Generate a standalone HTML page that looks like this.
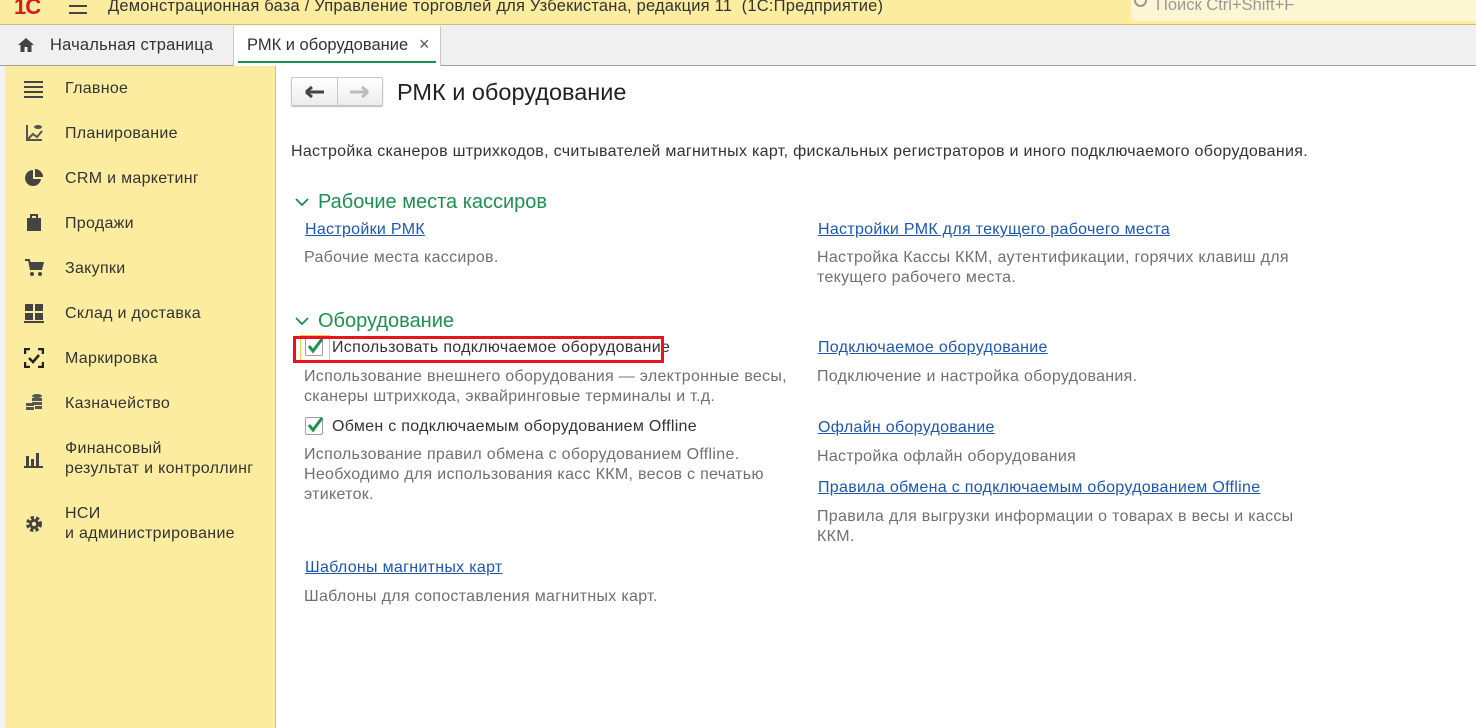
<!DOCTYPE html>
<html><head><meta charset="utf-8"><style>
*{margin:0;padding:0;box-sizing:border-box}
body{width:1476px;height:728px;overflow:hidden;font-family:"Liberation Sans",Arial,sans-serif;background:#fff;position:relative;color:#333}
.abs{position:absolute;white-space:nowrap}
#top{position:absolute;left:0;top:0;width:1476px;height:25px;background:#fbec9f;border-bottom:1px solid #cdbf78}
#tabs{position:absolute;left:0;top:25px;width:1476px;height:41px;background:#f0f0f0;border-bottom:1px solid #a0a0a0}
#side{position:absolute;left:5px;top:66px;width:271px;height:662px;background:#fbec9f;border-right:1px solid #bdbdbd}
#strip{position:absolute;left:0;top:66px;width:5px;height:662px;background:#f3f3f3}
.mi{position:absolute;left:65px;font-size:16px;letter-spacing:0.3px;color:#333;line-height:20px}
.ic{position:absolute;left:24px}
.f15{font-size:16px;letter-spacing:0.3px}
.link{color:#1c57b5;text-decoration:underline;font-size:16px;letter-spacing:0.3px}
.desc{color:#707070;font-size:16px;letter-spacing:0.3px;line-height:20px}
.h{color:#1e9050;font-size:20px}
.cb{position:absolute;width:18px;height:18px;border:1px solid #a0a0a0;background:#fff;border-radius:2px}
.big{font-size:16.5px}
</style></head><body>
<div id="top"></div>
<div class="abs" style="left:14px;top:-6px;color:#d7191f;font:bold 22px 'Liberation Sans';letter-spacing:-1px">1C</div>
<div class="abs" style="left:69px;top:5px;width:18px;height:2px;background:#444;box-shadow:0 7px 0 #444"></div>
<div class="abs big" style="left:108px;top:-3px;color:#333;letter-spacing:0.2px">Демонстрационная база / Управление торговлей для Узбекистана, редакция 11 &nbsp;(1С:Предприятие)</div>
<div class="abs" style="left:1131px;top:-4px;width:345px;height:25px;background:#fcf6d3;border-radius:3px"></div>
<div class="abs" style="left:1134px;top:-6px;width:13px;height:13px;border:2px solid #999;border-radius:50%"></div>
<div class="abs big" style="left:1156px;top:-4px;color:#999">Поиск Ctrl+Shift+F</div>

<div id="tabs"></div>
<svg class="abs" style="left:17px;top:37px" width="18" height="16" viewBox="0 0 18 16"><path d="M9 1L1 8h2.5v7h4v-5h3v5h4V8H17z" fill="#444"/></svg>
<div class="abs big" style="left:50px;top:36px;color:#333;letter-spacing:0.2px">Начальная страница</div>
<div class="abs" style="left:233px;top:26px;width:208px;height:40px;background:#fff;border-left:1px solid #c8c8c8;border-right:1px solid #c8c8c8"></div>
<div class="abs" style="left:238px;top:61px;width:198px;height:2px;background:#1e9050"></div>
<div class="abs big" style="left:247px;top:36px;color:#333">РМК и оборудование</div>
<div class="abs" style="left:419px;top:34px;font-size:18px;color:#555">×</div>

<div id="strip"></div>
<div id="side"></div>
<div class="ic" style="top:81px;width:19px;height:2px;background:#444;box-shadow:0 5px 0 #444,0 10px 0 #444,0 15px 0 #444"></div>
<div class="mi" style="top:79px">Главное</div>
<svg class="ic" style="top:123px" width="20" height="20" viewBox="0 0 20 20"><path d="M3 2v15h15M3 17l6-6 4 3 5-6" stroke="#555" stroke-width="2" fill="none"/><ellipse cx="14" cy="4" rx="4" ry="2" fill="#555"/></svg>
<div class="mi" style="top:124px">Планирование</div>
<svg class="ic" style="top:168px" width="20" height="20" viewBox="0 0 20 20"><path d="M9 2a8 8 0 1 0 8 9H9z" fill="#444"/><path d="M11 1v8h8a8 8 0 0 0-8-8z" fill="#444"/></svg>
<div class="mi" style="top:169px">CRM и маркетинг</div>
<svg class="ic" style="top:212px" width="20" height="20" viewBox="0 0 20 20"><rect x="3" y="6" width="14" height="13" fill="#444"/><path d="M7 7V3h6v4" stroke="#444" stroke-width="2" fill="none"/></svg>
<div class="mi" style="top:214px">Продажи</div>
<svg class="ic" style="top:258px" width="22" height="20" viewBox="0 0 22 20"><path d="M5 4h15l-2 8H7z" fill="#444"/><path d="M1 2h4l2 10" stroke="#444" stroke-width="2" fill="none"/><circle cx="8" cy="16" r="2" fill="#444"/><circle cx="16" cy="16" r="2" fill="#444"/></svg>
<div class="mi" style="top:259px">Закупки</div>
<svg class="ic" style="top:303px" width="20" height="20" viewBox="0 0 20 20"><rect x="1" y="1" width="8" height="7" fill="#444"/><rect x="11" y="1" width="8" height="7" fill="#444"/><rect x="1" y="10" width="8" height="7" fill="#444"/><rect x="11" y="10" width="8" height="7" fill="#444"/><rect x="0" y="18" width="20" height="2" fill="#444"/></svg>
<div class="mi" style="top:304px">Склад и доставка</div>
<svg class="ic" style="top:348px" width="20" height="20" viewBox="0 0 20 20"><path d="M1 6V1h5M14 1h5v5M19 14v5h-5M6 19H1v-5" stroke="#222" stroke-width="2.5" fill="none"/><path d="M5 10l4 4 6-7" stroke="#222" stroke-width="2.5" fill="none"/></svg>
<div class="mi" style="top:349px">Маркировка</div>
<svg class="ic" style="top:393px" width="20" height="20" viewBox="0 0 20 20"><g fill="#555"><ellipse cx="13" cy="3" rx="5" ry="2"/><rect x="8" y="5" width="10" height="3"/><rect x="8" y="9" width="10" height="3"/><rect x="2" y="10" width="8" height="3"/><rect x="2" y="14" width="8" height="3"/><rect x="11" y="13" width="7" height="3"/></g></svg>
<div class="mi" style="top:394px">Казначейство</div>
<svg class="ic" style="top:450px" width="20" height="18" viewBox="0 0 20 18"><g fill="#444"><rect x="2" y="6" width="3" height="10"/><rect x="7" y="9" width="3" height="7"/><rect x="12" y="3" width="3" height="13"/><rect x="0" y="16" width="19" height="2"/></g></svg>
<div class="mi" style="top:439px">Финансовый<br>результат и контроллинг</div>
<svg class="ic" style="top:514px" width="20" height="20" viewBox="0 0 20 20"><circle cx="10" cy="10" r="6" fill="none" stroke="#444" stroke-width="4" stroke-dasharray="3 2"/><circle cx="10" cy="10" r="5" fill="#444"/><circle cx="10" cy="10" r="2.2" fill="#fbec9f"/></svg>
<div class="mi" style="top:504px">НСИ<br>и администрирование</div>

<div class="abs" style="left:291px;top:77px;width:92px;height:29px;border:1px solid #c8c8c8;border-radius:2px;background:linear-gradient(#fff,#ececec);box-shadow:0 1px 1px #bbb"></div>
<div class="abs" style="left:337px;top:78px;width:1px;height:27px;background:#c8c8c8"></div>
<svg class="abs" style="left:305px;top:85px" width="20" height="14"><path d="M1 7h18M1 7l6-5M1 7l6 5" stroke="#444" stroke-width="3" fill="none"/></svg>
<svg class="abs" style="left:349px;top:85px" width="20" height="14"><path d="M1 7h17M19 7l-6-5M19 7l-6 5" stroke="#bbb" stroke-width="3" fill="none"/></svg>
<div class="abs" style="left:397px;top:79px;font-size:23.5px;color:#222">РМК и оборудование</div>

<div class="abs f15" style="left:291px;top:143px;color:#333">Настройка сканеров штрихкодов, считывателей магнитных карт, фискальных регистраторов и иного подключаемого оборудования.</div>

<svg class="abs" style="left:294px;top:196px" width="16" height="12"><path d="M2 3l6 6 6-6" stroke="#1e9050" stroke-width="1.8" fill="none"/></svg>
<div class="abs h" style="left:318px;top:191px">Рабочие места кассиров</div>
<div class="abs link" style="left:305px;top:221px">Настройки РМК</div>
<div class="abs desc" style="left:304px;top:248px">Рабочие места кассиров.</div>
<div class="abs link" style="left:818px;top:221px">Настройки РМК для текущего рабочего места </div>
<div class="abs desc" style="left:817px;top:248px">Настройка Кассы ККМ, аутентификации, горячих клавиш для<br>текущего рабочего места.</div>

<svg class="abs" style="left:294px;top:315px" width="16" height="12"><path d="M2 3l6 6 6-6" stroke="#1e9050" stroke-width="1.8" fill="none"/></svg>
<div class="abs h" style="left:318px;top:310px">Оборудование</div>
<div class="abs" style="left:300px;top:335px;width:30px;height:26px;border:1px solid #f2c94c"></div>
<div class="cb" style="left:305px;top:338px"></div>
<svg class="abs" style="left:305px;top:336px" width="20" height="20"><path d="M4 10l4 5 9-12" stroke="#1e9050" stroke-width="3" fill="none"/></svg>
<div class="abs f15" style="left:332px;top:339px;color:#333">Использовать подключаемое оборудование</div>
<div class="abs" style="left:293px;top:336px;width:371px;height:27px;border:3px solid #e8141b"></div>
<div class="abs desc" style="left:304px;top:367px">Использование внешнего оборудования — электронные весы,<br>сканеры штрихкода, эквайринговые терминалы и т.д.</div>
<div class="cb" style="left:305px;top:417px"></div>
<svg class="abs" style="left:305px;top:415px" width="20" height="20"><path d="M4 10l4 5 9-12" stroke="#1e9050" stroke-width="3" fill="none"/></svg>
<div class="abs f15" style="left:332px;top:418px;color:#333">Обмен с подключаемым оборудованием Offline</div>
<div class="abs desc" style="left:304px;top:445px">Использование правил обмена с оборудованием Offline.<br>Необходимо для использования касс ККМ, весов с печатью<br>этикеток.</div>

<div class="abs link" style="left:818px;top:339px">Подключаемое оборудование</div>
<div class="abs desc" style="left:817px;top:367px">Подключение и настройка оборудования.</div>
<div class="abs link" style="left:818px;top:419px">Офлайн оборудование</div>
<div class="abs desc" style="left:817px;top:447px">Настройка офлайн оборудования</div>
<div class="abs link" style="left:818px;top:479px">Правила обмена с подключаемым оборудованием Offline</div>
<div class="abs desc" style="left:817px;top:507px">Правила для выгрузки информации о товарах в весы и кассы<br>ККМ.</div>

<div class="abs link" style="left:305px;top:559px">Шаблоны магнитных карт</div>
<div class="abs desc" style="left:304px;top:587px">Шаблоны для сопоставления магнитных карт.</div>
</body></html>
